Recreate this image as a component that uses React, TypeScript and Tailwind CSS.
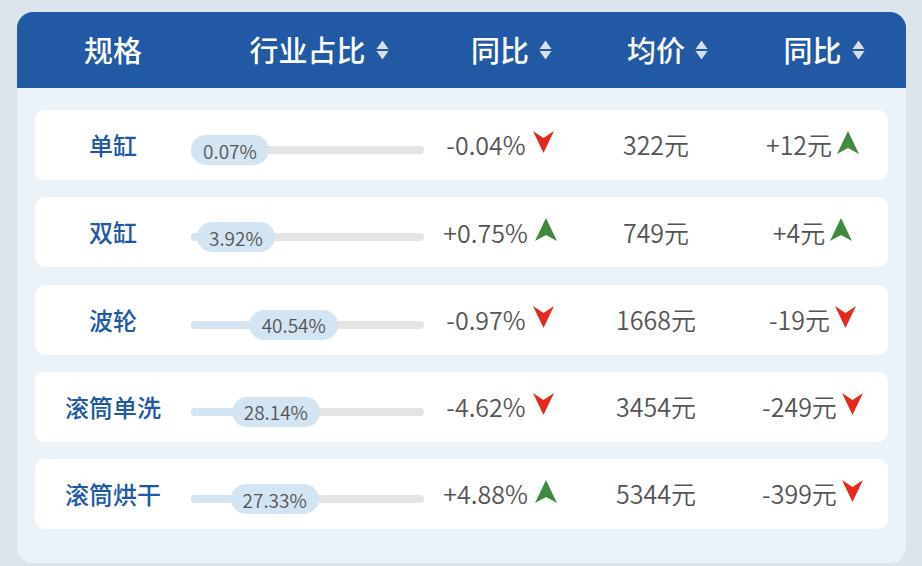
import React from 'react';

interface RowData {
  name: string;
  share: number;
  shareYoy: string;
  shareUp: boolean;
  price: string;
  priceYoy: string;
  priceUp: boolean;
}

const rows: RowData[] = [
  { name: '单缸', share: 0.07, shareYoy: '-0.04%', shareUp: false, price: '322元', priceYoy: '+12元', priceUp: true },
  { name: '双缸', share: 3.92, shareYoy: '+0.75%', shareUp: true, price: '749元', priceYoy: '+4元', priceUp: true },
  { name: '波轮', share: 40.54, shareYoy: '-0.97%', shareUp: false, price: '1668元', priceYoy: '-19元', priceUp: false },
  { name: '滚筒单洗', share: 28.14, shareYoy: '-4.62%', shareUp: false, price: '3454元', priceYoy: '-249元', priceUp: false },
  { name: '滚筒烘干', share: 27.33, shareYoy: '+4.88%', shareUp: true, price: '5344元', priceYoy: '-399元', priceUp: false },
];

const grid = 'grid grid-cols-[156px_233px_152px_160px_153px]';

const SortIcon = () => (
  <svg
    width="13"
    height="20"
    viewBox="0 0 13 20"
    className="absolute left-full ml-[10px] top-1/2 -translate-y-1/2"
  >
    <polygon points="0.5,9 6.5,0.5 12.5,9" fill="#d9dfe8" />
    <polygon points="0.5,11 12.5,11 6.5,19.5" fill="#d9dfe8" />
  </svg>
);

const Arrow = ({ up }: { up: boolean }) =>
  up ? (
    <svg width="22" height="23" viewBox="0 0 22 23" className="mb-[6px] shrink-0">
      <path d="M11 0 L22 23 L11 17 L0 23 Z" fill="#3f8a3c" />
    </svg>
  ) : (
    <svg width="21" height="22" viewBox="0 0 21 22" className="mb-[6px] shrink-0">
      <path d="M0 0 L10.5 7 L21 0 L10.5 22 Z" fill="#e5291d" />
    </svg>
  );

const HeaderCell = ({ label, sortable }: { label: string; sortable?: boolean }) => (
  <div className="flex items-center justify-center">
    <span className="relative">
      {label}
      {sortable && <SortIcon />}
    </span>
  </div>
);

// 气泡跟着进度走，同时不超出轨道
const ShareBar = ({ value }: { value: number }) => (
  <div className="relative flex h-full items-center pt-[10px]">
    <div className="relative h-[8px] w-full rounded-full bg-[#e4e4e4]">
      <div
        className="absolute left-0 top-0 h-full rounded-full bg-[#d3e4f3]"
        style={{ width: `${value}%` }}
      />
      <div
        className="absolute top-1/2 flex h-[30px] items-center rounded-full bg-[#d3e4f3] px-[12px] text-[19px] font-[350] leading-none text-[#555] whitespace-nowrap"
        style={{ left: `${value}%`, transform: `translate(-${value}%, -50%)` }}
      >
        {value.toFixed(2)}%
      </div>
    </div>
  </div>
);

export default function App() {
  return (
    <div
      className="h-[566px] w-[922px] bg-[#dde5ec] pl-[17px] pr-[16px] pt-[12px]"
      style={{ fontFamily: '"Noto Sans CJK SC", "Noto Sans", sans-serif' }}
    >
      <div className="overflow-hidden rounded-[16px] bg-[#ecf3f8]">
        {/* 表头 */}
        <div className={`${grid} h-[76px] bg-[#2159a4] px-[18px] text-[29px] font-medium text-white`}>
          <HeaderCell label="规格" />
          <HeaderCell label="行业占比" sortable />
          <HeaderCell label="同比" sortable />
          <HeaderCell label="均价" sortable />
          <HeaderCell label="同比" sortable />
        </div>

        <div className="flex flex-col gap-[17.3px] px-[18px] pb-[34px] pt-[22px]">
          {rows.map((r) => (
            <div key={r.name} className={`${grid} h-[70px] rounded-[10px] bg-white text-[25px] font-[350] text-[#555]`}>
              <div className="flex items-center justify-center text-[24px] font-medium text-[#2159a4]">{r.name}</div>
              <ShareBar value={r.share} />
              <div className="flex items-center justify-center gap-[7px]">
                <span>{r.shareYoy}</span>
                <Arrow up={r.shareUp} />
              </div>
              <div className="flex items-center justify-center">{r.price}</div>
              <div className="flex items-center justify-center gap-[5px]">
                <span>{r.priceYoy}</span>
                <Arrow up={r.priceUp} />
              </div>
            </div>
          ))}
        </div>
      </div>
    </div>
  );
}
